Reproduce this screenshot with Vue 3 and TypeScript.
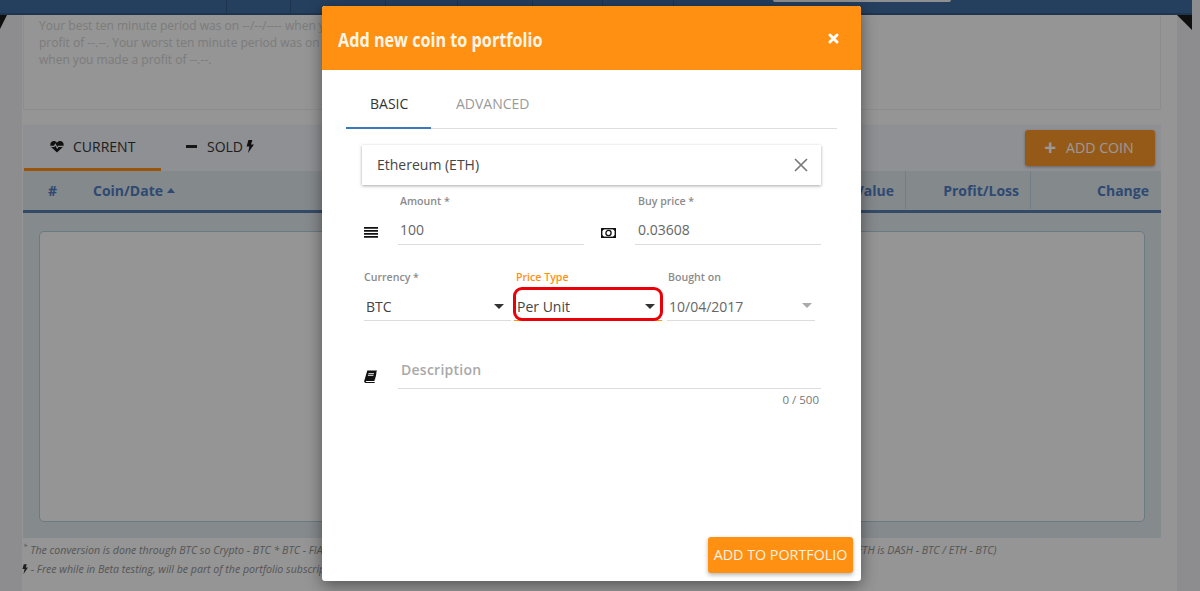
<script setup lang="ts">
const topCells: number[] = [64, 95, 72, 75, 70, 71, 84]
const columns: string[] = ['Value', 'Profit/Loss', 'Change']
</script>

<template>
  <div class="page">
    <header class="topbar">
      <span v-for="w in topCells" :key="w" class="top-cell" :style="{ width: w + 'px' }"></span>
      <span class="top-pill"></span>
    </header>
    <span class="corner corner-left"></span>
    <span class="corner corner-right"></span>
    <main class="content">
      <section class="summary">
        <p>Your best ten minute period was on --/--/---- when you made a<br />profit of --.--. Your worst ten minute period was on --/--/----<br />when you made a profit of --.--.</p>
      </section>
      <section class="portfolio">
        <div class="tabs-row">
          <div class="bg-tab active">
            <svg class="bg-ico" viewBox="0 0 14 13"><path fill="#1c1c1c" d="M7 12.6 1.4 7.2C-.5 5.2.2 1.400 3.500 1c1.500-.1 2.700.6 3.500 1.800C7.800 1.600 9 .9 10.500 1c3.300.4 4 4.200 2.100 6.200z" /><path fill="none" stroke="#f0f0f4" stroke-width="1.100" d="M1 6.400h3.200l1.200-2 1.800 3.600 1.200-1.600H13" /></svg>
            CURRENT
          </div>
          <div class="bg-tab">
            <span class="minus"></span>
            SOLD
            <svg class="bolt" viewBox="0 0 8 13"><path fill="#1c1c1c" d="M2.400 0h4L5 4.500h3L2 13l1.400-6.500H.6z" /></svg>
          </div>
          <button class="add-coin" type="button"><span class="plus">+</span> ADD COIN</button>
        </div>
        <div class="table-head">
          <span class="th hash">#</span>
          <span class="th coin">Coin/Date <i class="up"></i></span>
          <span class="spacer"></span>
          <span v-for="c in columns" :key="c" class="th col" :class="'col-' + c.length">{{ c }}</span>
        </div>
        <div class="table-body"><div class="empty-box"></div></div>
      </section>
      <p class="note"><sup>*</sup> The conversion is done through BTC so Crypto - BTC * BTC - FIAT and Crypto to Crypto conversion is always done as Crypto - BTC / Crypto - BTC (For example, the price of DASH in ETH is DASH - BTC / ETH - BTC)</p>
      <p class="note note-2">
        <svg class="bolt small" viewBox="0 0 8 13"><path fill="#333" d="M2.400 0h4L5 4.500h3L2 13l1.400-6.500H.6z" /></svg>
        - Free while in Beta testing, will be part of the portfolio subscription later on
      </p>
    </main>

    <div class="backdrop"></div>

    <div class="modal">
      <div class="modal-head">
        <h1>Add new coin to portfolio</h1>
        <svg class="close" viewBox="0 0 10 10"><path d="M1.800 1.800l6.400 6.400M8.200 1.800 1.800 8.200" stroke="#fff" stroke-width="2.600" stroke-linecap="round" /></svg>
      </div>
      <div class="modal-body">
        <div class="tabs">
          <div class="tab tab-on">BASIC</div>
          <div class="tab">ADVANCED</div>
        </div>
        <div class="picker">
          <span>Ethereum (ETH)</span>
          <svg class="clear" viewBox="0 0 14 14"><path d="M1 1l12 12M13 1 1 13" stroke="#7a7a7a" stroke-width="1.700" /></svg>
        </div>
        <div class="pair">
          <div class="icon-field first">
            <svg class="field-ico" viewBox="0 0 14 11"><path fill="#111" d="M0 0h14v1.700H0zM0 3h14v1.700H0zM0 6h14v1.700H0zM0 9h14v1.700H0z" /></svg>
            <label class="field">
              <span class="lbl">Amount *</span>
              <span class="val">100</span>
            </label>
          </div>
          <div class="icon-field second">
            <svg class="field-ico bill" viewBox="0 0 15 10"><rect x=".7" y=".7" width="13.600" height="8.600" fill="none" stroke="#111" stroke-width="1.400" /><circle cx="7.500" cy="5" r="2.600" fill="none" stroke="#111" stroke-width="1.300" /><path d="M1 3V1h2M12 1h2v2M14 7v2h-2M3 9H1V7" stroke="#111" fill="none" stroke-width="1.500" /></svg>
            <label class="field">
              <span class="lbl">Buy price *</span>
              <span class="val">0.03608</span>
            </label>
          </div>
        </div>
        <div class="triple">
          <div class="sel sel-currency">
            <span class="lbl">Currency *</span>
            <div class="sel-line"><span>BTC</span><i class="down"></i></div>
          </div>
          <div class="sel sel-type">
            <span class="lbl lbl-on">Price Type</span>
            <div class="sel-line line-on"><span>Per Unit</span><i class="down"></i></div>
            <span class="highlight"></span>
          </div>
          <div class="sel sel-date">
            <span class="lbl">Bought on</span>
            <div class="sel-line"><span class="date">10/04/2017</span><i class="down grey"></i></div>
          </div>
        </div>
        <div class="desc">
          <svg class="field-ico book" viewBox="0 0 13 13"><path fill="#111" d="M3.300.5H13l-.4 1-2.200 9.500H2.500c-.8 0-.9.900-.2.900h8.500l.2-.9.800-8.300.6.300-1.800 9.900H1.800C.7 12.900 0 12 .2 11z" /><path fill="#fff" d="M4.500 2.900h5.600l-.2.900H4.300zM4 4.800h5.600l-.2.900H3.800z" /></svg>
          <div class="desc-field">
            <div class="desc-line">Description</div>
            <div class="counter">0 / 500</div>
          </div>
        </div>
        <div class="actions">
          <button class="submit" type="button">ADD TO PORTFOLIO</button>
        </div>
      </div>
    </div>
  </div>
</template>

<style>
html, body { margin: 0; height: 100%; overflow: hidden; background: #ebecf0; }
</style>

<style scoped>
.page {
  position: relative;
  width: 1200px;
  height: 591px;
  overflow: hidden;
  background: #ebecf0;
  font-family: "Open Sans", "Liberation Sans", sans-serif;
  color: #333;
}
.topbar {
  display: flex;
  width: 966px;
  height: 13px;
  background: #3f6a9e;
  border-bottom: 2px solid #345782;
  padding-left: 226px;
}
.top-cell { flex: none; box-sizing: border-box; border-left: 1px solid #345782; }
.top-pill {
  flex: none;
  width: 178px;
  height: 2px;
  margin-left: 16px;
  background: #f0f0f0;
  border-radius: 0 0 3px 3px;
}
.corner { position: absolute; top: 15px; width: 0; height: 0; border-style: solid; }
.corner-left { left: 0; border-width: 14px 7px 0 0; border-color: #1a1a1a transparent transparent transparent; }
.corner-right { left: 1177px; border-width: 0 15px 15px 0; border-color: transparent #1a1a1a transparent transparent; }
.content {
  width: 1155px;
  margin-left: 22px;
  height: 576px;
  padding: 0 16px 0 1px;
  box-sizing: border-box;
  background: #f8f8f8;
}
.summary {
  height: 95px;
  box-sizing: border-box;
  border: 1px solid #ececec;
  border-top: 0;
  padding: 2px 15px 0;
}
.summary p {
  margin: 0;
  font-size: 12px;
  line-height: 17px;
  color: #cfcfcf;
}
.portfolio {
  margin-top: 15px;
  border-top: 1px solid #ecedf0;
}
.tabs-row {
  display: flex;
  align-items: stretch;
  height: 45px;
  background: #eff0f5;
  padding-left: 1px;
}
.bg-tab {
  width: 137px;
  box-sizing: border-box;
  display: flex;
  align-items: center;
  gap: 9px;
  padding: 0 0 2px 26px;
  font-size: 14px;
  color: #333;
  border-bottom: 3px solid transparent;
}
.bg-tab.active { border-bottom-color: #ff9011; }
.bg-tab + .bg-tab { gap: 10px; padding-left: 25px; width: auto; }
.bg-ico { width: 14px; height: 13px; }
.minus { width: 11px; height: 3px; background: #262626; }
.bolt { width: 8px; height: 13px; margin-left: -7px; }
.bolt.small { margin: 0; width: 6px; height: 10px; vertical-align: -1px; }
.add-coin {
  margin: 4px 6px 0 auto;
  width: 130px;
  height: 36px;
  padding: 0 0 2px;
  border: 0;
  border-radius: 3px;
  background: #fb9628;
  color: #fff;
  font: 400 14.200px "Open Sans", sans-serif;
  box-shadow: 0 1px 3px rgba(0, 0, 0, .3);
}
.plus { font-size: 21px; font-weight: 700; line-height: 14px; vertical-align: -2px; margin-right: 6px; margin-left: -2px; }
.table-head {
  display: flex;
  align-items: center;
  height: 42px;
  box-sizing: border-box;
  padding-bottom: 1px;
  background: #dce4e9;
  border-bottom: 3px solid #577cb0;
  color: #4e7bbf;
  font-size: 14px;
  font-weight: 700;
}
.th { white-space: nowrap; }
.hash { margin-left: 25px; width: 45px; }
.coin { display: inline-flex; align-items: center; gap: 4px; }
.up { width: 0; height: 0; border: 4px solid transparent; border-top: 0; border-bottom: 5px solid #4e7bbf; }
.spacer { flex: 1; }
.col { height: 100%; display: flex; align-items: center; justify-content: flex-end; box-sizing: border-box; padding-right: 11px; border-right: 1px solid #c2d2de; }
.col-5 { width: 120px; }
.col-11 { width: 125px; }
.col-6 { width: 130px; border-right: 0; padding-right: 12px; }
.table-body {
  height: 325px;
  box-sizing: border-box;
  padding: 18px 16px 16px;
  background: #dee6ea;
}
.empty-box {
  height: 100%;
  box-sizing: border-box;
  border: 1px solid #b0cbd9;
  border-radius: 5px;
  background: #f8f8f8;
}
.note {
  margin: 5px 0 0 0;
  font-size: 10.600px;
  line-height: 15px;
  font-style: italic;
  color: #8f8f8f;
  white-space: nowrap;
}
.note sup { font-size: 8px; line-height: 0; }
.note-2 { margin-top: 4px; margin-left: -1px; }
.backdrop {
  position: absolute;
  inset: 0;
  background: rgba(0, 0, 0, .4);
}

.modal {
  position: absolute;
  left: 322px;
  top: 6px;
  width: 539px;
  height: 575px;
  display: flex;
  flex-direction: column;
  background: #fff;
  border-radius: 3px;
  box-shadow: 0 4px 16px rgba(0, 0, 0, .45);
}
.modal-head {
  flex: none;
  height: 64px;
  box-sizing: border-box;
  background: #ff9011;
  border-radius: 3px 3px 0 0;
  display: flex;
  align-items: center;
  justify-content: space-between;
  padding: 2px 22px 0 16px;
}
.modal-head h1 {
  margin: 0;
  color: #fff6e8;
  font-size: 20px;
  font-weight: 700;
  white-space: nowrap;
  transform: scaleX(.81);
  transform-origin: left center;
}
.close { width: 11px; height: 11px; margin-bottom: 2px; }
.modal-body {
  flex: 1;
  display: flex;
  flex-direction: column;
  padding: 0 24px 0;
  min-height: 0;
}
.tabs {
  display: flex;
  height: 59px;
  box-sizing: border-box;
  border-bottom: 1px solid #dedede;
}
.tab {
  height: 59px;
  box-sizing: border-box;
  padding-top: 24px;
  width: 110px;
  font-size: 14px;
  line-height: 19px;
  color: #9a9a9a;
}
.tab-on {
  width: 85px;
  margin-right: 25px;
  padding-left: 24px;
  color: #333;
  border-bottom: 2px solid #3a7ab8;
}
.picker {
  margin: 16px 16px 0;
  height: 40px;
  padding: 0 13px 0 15px;
  display: flex;
  align-items: center;
  justify-content: space-between;
  box-shadow: 0 1px 3px rgba(0, 0, 0, .35);
  font-size: 14px;
  color: #444;
}
.picker span { margin-bottom: 2px; }
.clear { width: 14px; height: 14px; }
.pair { display: flex; margin: 9px 16px 0 18px; }
.icon-field { display: flex; align-items: flex-end; }
.first { width: 220px; }
.first .field-ico { margin: 0 20px 7px 0; }
.second { flex: 1; margin-left: 17px; }
.second .field-ico { margin: 0 19px 7px 0; }
.field-ico { width: 14px; height: 11px; flex: none; }
.bill { width: 15px; height: 10px; }
.field { flex: 1; display: flex; flex-direction: column; }
.lbl { display: block; font-size: 10.600px; line-height: 14px; font-weight: 600; color: #8b8b8b; white-space: nowrap; }
.field .lbl { padding-left: 2px; }
.second .lbl { padding-left: 3px; }
.val {
  margin-top: 8px;
  height: 29px;
  box-sizing: border-box;
  padding: 4px 0 0 2px;
  border-bottom: 1px solid #dcdcdc;
  font-size: 14px;
  line-height: 19px;
  color: #666;
}
.second .val { padding-left: 3px; }
.triple { display: flex; margin: 25px 0 0 18px; }
.sel { position: relative; }
.sel-currency { width: 147px; margin-right: 3px; }
.sel-type { width: 148px; margin-right: 5px; }
.sel-date { width: 148px; }
.sel-line {
  margin-top: 8px;
  height: 29px;
  box-sizing: border-box;
  padding: 0 7px 0 2px;
  display: flex;
  justify-content: space-between;
  align-items: center;
  border-bottom: 1px solid #dcdcdc;
  font-size: 14px;
  color: #444;
}
.line-on { border-bottom: 1px solid #ff9011; padding-left: 3px; padding-right: 7px; }
.lbl-on { color: #ff9011; }
.sel-type .lbl { padding-left: 2px; }
.sel-date .lbl { padding-left: 1px; }
.date { color: #666; }
.sel-date .sel-line { padding-right: 3px; }
.down { width: 0; height: 0; border: 5px solid transparent; border-bottom: 0; border-top: 5px solid #333; }
.down.grey { border-top-color: #aaa; margin-top: -2px; }
.highlight {
  position: absolute;
  left: -1px;
  top: 17px;
  width: 150px;
  height: 34px;
  box-sizing: border-box;
  border: 3px solid #e90009;
  border-radius: 9px;
  pointer-events: none;
}
.desc { display: flex; margin: 29px 16px 0 18px; }
.book { width: 13px; height: 13px; margin: 20px 21px 0 0; }
.desc-field { flex: 1; }
.desc-line {
  height: 39px;
  box-sizing: border-box;
  padding: 10px 0 0 3px;
  border-bottom: 1px solid #dcdcdc;
  font-size: 14px;
  line-height: 19px;
  letter-spacing: .25px;
  font-weight: 600;
  color: #a9a9a9;
}
.counter { margin-top: 3px; padding-right: 2px; text-align: right; font-size: 11.500px; line-height: 15px; color: #777; }
.actions { margin-top: auto; display: flex; justify-content: flex-end; margin-right: -16px; padding-bottom: 8px; }
.submit {
  width: 145px;
  height: 36px;
  padding: 0 0 2px;
  border: 0;
  border-radius: 3px;
  background: #ff9011;
  color: #fff3e2;
  font: 400 14.300px "Open Sans", sans-serif;
  white-space: nowrap;
  box-shadow: 0 2px 4px rgba(0, 0, 0, .3);
}
</style>
